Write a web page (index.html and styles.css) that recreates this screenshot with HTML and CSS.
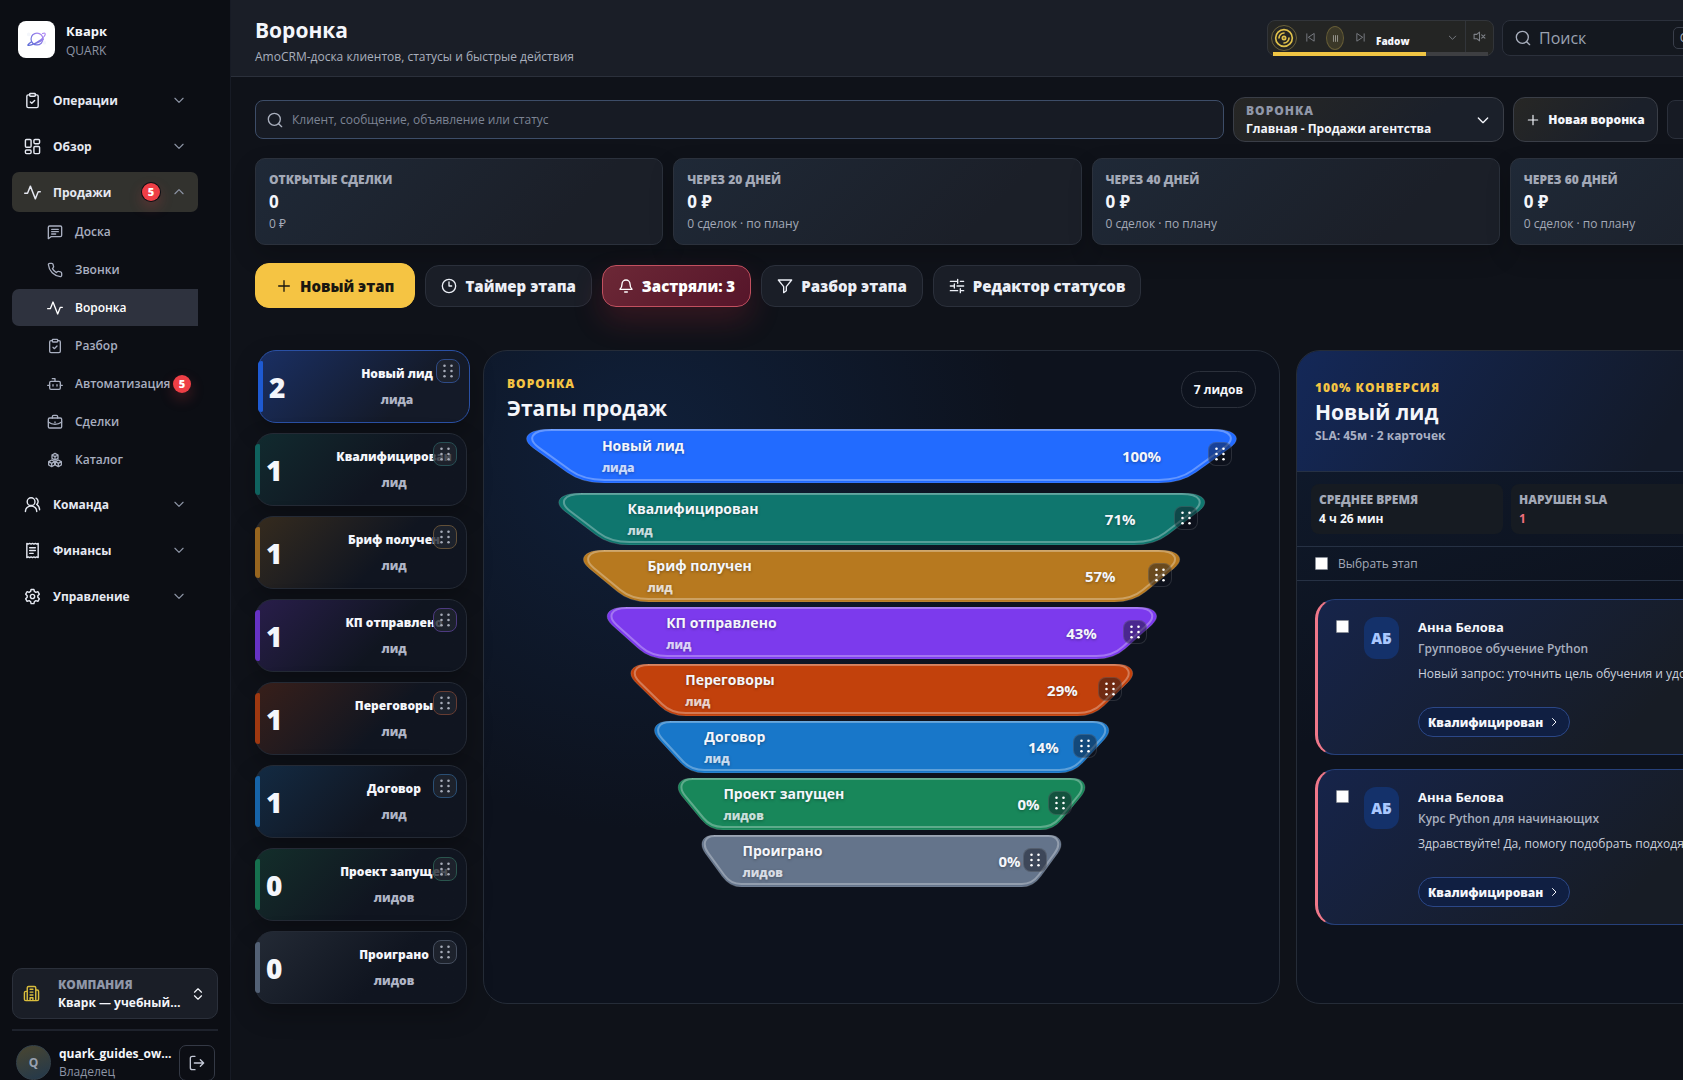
FILE: index.html
```html
<!DOCTYPE html>
<html lang="ru">
<head>
    <meta charset="UTF-8">
    <meta name="viewport" content="width=device-width, initial-scale=1.0">
    <title>Воронка — Кварк</title>
    <link rel="stylesheet" href="styles.css">
</head>
<body>
    <!-- Набор иконок -->
    <svg class="sprite" aria-hidden="true">
        <symbol id="i-clip" viewBox="0 0 24 24"><rect x="8" y="2" width="8" height="4" rx="1"/><path d="M16 4h2a2 2 0 0 1 2 2v14a2 2 0 0 1-2 2H6a2 2 0 0 1-2-2V6a2 2 0 0 1 2-2h2M9 14l2 2 4-4"/></symbol>
        <symbol id="i-grid" viewBox="0 0 24 24"><rect x="2" y="2" width="8" height="11" rx="1.5"/><rect x="14" y="2" width="8" height="6" rx="1.5"/><rect x="14" y="12" width="8" height="10" rx="1.5"/><rect x="2" y="17" width="8" height="5" rx="1.5"/></symbol>
        <symbol id="i-pulse" viewBox="0 0 24 24"><path d="M1 13h4l4-10 7 18 4-10h3"/></symbol>
        <symbol id="i-msg" viewBox="0 0 24 24"><path d="M4 3h16a2 2 0 0 1 2 2v12a2 2 0 0 1-2 2H6l-4 3V5a2 2 0 0 1 2-2zM7 8h10M7 11.500h10M7 15h6"/></symbol>
        <symbol id="i-phone" viewBox="0 0 24 24"><path d="M22 16.900v3a2 2 0 0 1-2.200 2A19.800 19.800 0 0 1 2.100 4.200 2 2 0 0 1 4.100 2h3a2 2 0 0 1 2 1.700c.1 1 .4 1.900.7 2.800a2 2 0 0 1-.5 2.100L8.100 9.900a16 16 0 0 0 6 6l1.300-1.300a2 2 0 0 1 2.100-.4c.9.3 1.800.6 2.800.7a2 2 0 0 1 1.700 2z"/></symbol>
        <symbol id="i-bot" viewBox="0 0 24 24"><path d="M12 8V4H8M1 14h3M20 14h3M9 13v2M15 13v2"/><rect x="4" y="8" width="16" height="12" rx="2"/></symbol>
        <symbol id="i-case" viewBox="0 0 24 24"><rect x="2" y="6" width="20" height="15" rx="2"/><path d="M8 6V4a2 2 0 0 1 2-2h4a2 2 0 0 1 2 2v2M2 12c6 4.500 14 4.500 20 0M12 12v1"/></symbol>
        <symbol id="i-boxes" viewBox="0 0 24 24"><path d="M12 2l4.500 2.500v5L12 12 7.500 9.500v-5zM7 12l4.500 2.500v5L7 22l-4.500-2.500v-5zM17 12l4.500 2.500v5L17 22l-4.500-2.500v-5zM7.500 4.500L12 7l4.500-2.500M12 7v5M2.500 14.500L7 17l4.500-2.500M7 17v5M12.500 14.500L17 17l4.500-2.500M17 17v5"/></symbol>
        <symbol id="i-users" viewBox="0 0 24 24"><circle cx="10" cy="8" r="5.500"/><path d="M2 22a8 8 0 0 1 16 0M17 3a5.500 5.500 0 0 1 1 9c2.500 1.500 4 4 4 7.500"/></symbol>
        <symbol id="i-bill" viewBox="0 0 24 24"><path d="M4 2l2 1 2-1 2 1 2-1 2 1 2-1 2 1 2-1v20l-2-1-2 1-2-1-2 1-2-1-2 1-2-1-2 1zM8 8h8M8 12h8M8 16h5"/></symbol>
        <symbol id="i-gear" viewBox="0 0 24 24"><path d="M10 2h4l.7 2.900 2 1.200 2.900-.9 2 3.500L19.500 10.800v2.400l2.100 2.100-2 3.500-2.900-.9-2 1.200L14 22h-4l-.7-2.900-2-1.200-2.900.9-2-3.500 2.100-2.100v-2.400L2.400 8.700l2-3.500 2.900.9 2-1.200z"/><circle cx="12" cy="12" r="3"/></symbol>
        <symbol id="i-down" viewBox="0 0 24 24"><path d="M5 9l7 7 7-7"/></symbol>
        <symbol id="i-up" viewBox="0 0 24 24"><path d="M5 15l7-7 7 7"/></symbol>
        <symbol id="i-right" viewBox="0 0 24 24"><path d="M9 5l7 7-7 7"/></symbol>
        <symbol id="i-updown" viewBox="0 0 24 24"><path d="M6 9l6-6 6 6M6 15l6 6 6-6"/></symbol>
        <symbol id="i-office" viewBox="0 0 24 24"><path d="M6 22V4a2 2 0 0 1 2-2h8a2 2 0 0 1 2 2v18zM6 9H4a2 2 0 0 0-2 2v9a2 2 0 0 0 2 2h2M18 7h2a2 2 0 0 1 2 2v11a2 2 0 0 1-2 2h-2M10 6h4M10 10h4M10 14h4M10 22v-4h4v4"/></symbol>
        <symbol id="i-exit" viewBox="0 0 24 24"><path d="M9 2H5a3 3 0 0 0-3 3v14a3 3 0 0 0 3 3h4M8 12h14M17 7l5 5-5 5"/></symbol>
        <symbol id="i-find" viewBox="0 0 24 24"><circle cx="11" cy="11" r="9"/><path d="M17.500 17.500L22 22"/></symbol>
        <symbol id="i-plus" viewBox="0 0 24 24"><path d="M12 4v16M4 12h16"/></symbol>
        <symbol id="i-clock" viewBox="0 0 24 24"><circle cx="12" cy="12" r="10"/><path d="M12 6v6h4"/></symbol>
        <symbol id="i-bell" viewBox="0 0 24 24"><path d="M3 17c2-2 3-4 3-8a6 6 0 0 1 12 0c0 4 1 6 3 8zM10 21h4"/></symbol>
        <symbol id="i-filter" viewBox="0 0 24 24"><path d="M2 3h20l-8 10v6l-4 3v-9z"/></symbol>
        <symbol id="i-tune" viewBox="0 0 24 24"><path d="M2 5h11M17 5h5M13 2v6M2 12h6M12 12h10M8 9v6M2 19h11M17 19h5M17 16v6"/></symbol>
        <symbol id="i-prev" viewBox="0 0 24 24"><path d="M20 4v16L8 12zM4 4v16"/></symbol>
        <symbol id="i-next" viewBox="0 0 24 24"><path d="M4 4v16l12-8zM20 4v16"/></symbol>
        <symbol id="i-pause" viewBox="0 0 24 24"><path d="M5 2v20M12 2v20M19 2v20"/></symbol>
        <symbol id="i-mute" viewBox="0 0 24 24"><path d="M12 4v16l-5-4H2V8h5zM16 9l6 6M22 9l-6 6"/></symbol>
        <symbol id="i-disc" viewBox="0 0 24 24"><circle cx="12" cy="12" r="10"/><circle cx="12" cy="12" r="2"/><path d="M6 12a6 6 0 0 1 6-6M18 12a6 6 0 0 1-6 6"/></symbol>
        <symbol id="i-trash" viewBox="0 0 24 24"><path d="M3 6h18M8 6V3h8v3M5 6l1 16h12l1-16"/></symbol>
        <symbol id="i-grip" viewBox="0 0 24 24"><g fill="currentColor" stroke="none"><circle cx="6" cy="3" r="2.200"/><circle cx="18" cy="3" r="2.200"/><circle cx="6" cy="12" r="2.200"/><circle cx="18" cy="12" r="2.200"/><circle cx="6" cy="21" r="2.200"/><circle cx="18" cy="21" r="2.200"/></g></symbol>
        <!-- Форма ступени воронки -->
        <symbol id="i-step" viewBox="0 0 100 52" preserveAspectRatio="none">
            <path class="step-back" d="M6 0H94C97.500 0 98.200 9.500 96.500 18.200L92 41.600Q90 52 87 52H13Q10 52 8 41.600L3.500 18.200C1.800 9.500 2.500 0 6 0Z"/>
            <path class="step-edge" d="M6 1H94C96.900 1 97.300 10 95.700 18.200L91.500 40Q89.800 49 87 49H13Q10.200 49 8.500 40L4.300 18.200C2.700 10 3.100 1 6 1Z"/>
        </symbol>
    </svg>

    <div class="app">
        <aside class="sidebar">
            <div class="brand">
                <span class="brand-logo">
                    <svg viewBox="0 0 24 24"><defs><linearGradient id="lg" x1="0" y1="1" x2="1" y2="0"><stop offset="0" stop-color="#5b6bd6"/><stop offset="1" stop-color="#b58cf5"/></linearGradient></defs><g fill="none" stroke="url(#lg)" stroke-width="1.300"><circle cx="12" cy="12" r="6.500"/><path d="M6 15c-4 3-5 4-3 4 4 0 13-5 17-10 2-3 1-4-2-3M8 17c2 .5 8-2 11-5"/></g><circle cx="3" cy="7" r="1" fill="#8f7be8"/><circle cx="20" cy="16" r="1" fill="#8f7be8"/></svg>
                </span>
                <div>
                    <strong>Кварк</strong>
                    <span>QUARK</span>
                </div>
            </div>

            <nav class="nav">
                <button class="nav-group"><svg><use href="#i-clip"/></svg>Операции<svg class="chev"><use href="#i-down"/></svg></button>
                <button class="nav-group"><svg><use href="#i-grid"/></svg>Обзор<svg class="chev"><use href="#i-down"/></svg></button>
                <button class="nav-group open"><svg><use href="#i-pulse"/></svg>Продажи<span class="badge ring">5</span><svg class="chev"><use href="#i-up"/></svg></button>
                <div class="subnav">
                    <a href="#"><svg><use href="#i-msg"/></svg>Доска</a>
                    <a href="#"><svg><use href="#i-phone"/></svg>Звонки</a>
                    <a href="#" class="active"><svg><use href="#i-pulse"/></svg>Воронка</a>
                    <a href="#"><svg><use href="#i-clip"/></svg>Разбор</a>
                    <a href="#"><svg><use href="#i-bot"/></svg>Автоматизация<span class="badge">5</span></a>
                    <a href="#"><svg><use href="#i-case"/></svg>Сделки</a>
                    <a href="#"><svg><use href="#i-boxes"/></svg>Каталог</a>
                </div>
                <button class="nav-group"><svg><use href="#i-users"/></svg>Команда<svg class="chev"><use href="#i-down"/></svg></button>
                <button class="nav-group"><svg><use href="#i-bill"/></svg>Финансы<svg class="chev"><use href="#i-down"/></svg></button>
                <button class="nav-group"><svg><use href="#i-gear"/></svg>Управление<svg class="chev"><use href="#i-down"/></svg></button>
            </nav>

            <div class="company">
                <svg class="company-icon"><use href="#i-office"/></svg>
                <div class="company-text">
                    <label for="company">Компания</label>
                    <select id="company"><option>Кварк — учебный центр</option></select>
                </div>
                <svg class="company-arrows"><use href="#i-updown"/></svg>
            </div>
            <div class="user">
                <span class="avatar">Q</span>
                <div class="user-text">
                    <strong>quark_guides_owner</strong>
                    <span>Владелец</span>
                </div>
                <button class="exit" aria-label="Выйти"><svg><use href="#i-exit"/></svg></button>
            </div>
        </aside>

        <main class="main">
            <header class="top">
                <div class="top-title">
                    <h1>Воронка</h1>
                    <p>AmoCRM-доска клиентов, статусы и быстрые действия</p>
                </div>
                <div class="top-tools">
                    <div class="player">
                        <button class="disc" aria-label="Плеер"><svg><use href="#i-disc"/></svg></button>
                        <button aria-label="Назад"><svg><use href="#i-prev"/></svg></button>
                        <button class="pause" aria-label="Пауза"><svg><use href="#i-pause"/></svg></button>
                        <button aria-label="Вперёд"><svg><use href="#i-next"/></svg></button>
                        <span class="track">Fadow</span>
                        <button aria-label="Список"><svg><use href="#i-down"/></svg></button>
                        <button class="mute" aria-label="Без звука"><svg><use href="#i-mute"/></svg></button>
                        <span class="progress"><span style="width: 71%"></span></span>
                    </div>
                    <div class="search">
                        <svg><use href="#i-find"/></svg>
                        <input type="text" placeholder="Поиск" aria-label="Поиск">
                        <kbd>Ctrl K</kbd>
                    </div>
                </div>
            </header>

            <div class="content">
                <div class="toolbar">
                    <div class="client-search">
                        <svg><use href="#i-find"/></svg>
                        <input type="text" placeholder="Клиент, сообщение, объявление или статус" aria-label="Поиск клиента">
                    </div>
                    <div class="pipeline">
                        <div>
                            <label for="pipeline">Воронка</label>
                            <select id="pipeline"><option>Главная - Продажи агентства</option></select>
                        </div>
                        <svg><use href="#i-down"/></svg>
                    </div>
                    <button class="new-pipeline"><svg><use href="#i-plus"/></svg>Новая воронка</button>
                    <button class="remove" aria-label="Удалить"><svg><use href="#i-trash"/></svg></button>
                </div>

                <section class="stats">
                    <div class="stat"><h3>Открытые сделки</h3><strong>0</strong><span>0 ₽</span></div>
                    <div class="stat"><h3>Через 20 дней</h3><strong>0 ₽</strong><span>0 сделок · по плану</span></div>
                    <div class="stat"><h3>Через 40 дней</h3><strong>0 ₽</strong><span>0 сделок · по плану</span></div>
                    <div class="stat"><h3>Через 60 дней</h3><strong>0 ₽</strong><span>0 сделок · по плану</span></div>
                </section>

                <div class="actions">
                    <button class="primary"><svg><use href="#i-plus"/></svg>Новый этап</button>
                    <button><svg><use href="#i-clock"/></svg>Таймер этапа</button>
                    <button class="danger"><svg><use href="#i-bell"/></svg>Застряли: 3</button>
                    <button><svg><use href="#i-filter"/></svg>Разбор этапа</button>
                    <button><svg><use href="#i-tune"/></svg>Редактор статусов</button>
                </div>

                <div class="board">
                    <div class="rail">
                        <div class="rail-card c-blue selected"><b>2</b><div><strong>Новый лид</strong><span>лида</span></div><button class="grip" aria-label="Переместить"><svg><use href="#i-grip"/></svg></button></div>
                        <div class="rail-card c-teal"><b>1</b><div><strong>Квалифицирован</strong><span>лид</span></div><button class="grip" aria-label="Переместить"><svg><use href="#i-grip"/></svg></button></div>
                        <div class="rail-card c-amber"><b>1</b><div><strong>Бриф получен</strong><span>лид</span></div><button class="grip" aria-label="Переместить"><svg><use href="#i-grip"/></svg></button></div>
                        <div class="rail-card c-violet"><b>1</b><div><strong>КП отправлено</strong><span>лид</span></div><button class="grip" aria-label="Переместить"><svg><use href="#i-grip"/></svg></button></div>
                        <div class="rail-card c-orange"><b>1</b><div><strong>Переговоры</strong><span>лид</span></div><button class="grip" aria-label="Переместить"><svg><use href="#i-grip"/></svg></button></div>
                        <div class="rail-card c-sky"><b>1</b><div><strong>Договор</strong><span>лид</span></div><button class="grip" aria-label="Переместить"><svg><use href="#i-grip"/></svg></button></div>
                        <div class="rail-card c-green"><b>0</b><div><strong>Проект запущен</strong><span>лидов</span></div><button class="grip" aria-label="Переместить"><svg><use href="#i-grip"/></svg></button></div>
                        <div class="rail-card c-gray"><b>0</b><div><strong>Проиграно</strong><span>лидов</span></div><button class="grip" aria-label="Переместить"><svg><use href="#i-grip"/></svg></button></div>
                    </div>

                    <section class="panel funnel">
                        <div class="funnel-head">
                            <div>
                                <p class="eyebrow">Воронка</p>
                                <h2>Этапы продаж</h2>
                            </div>
                            <span class="pill">7 лидов</span>
                        </div>
                        <div class="steps">
                            <div class="step c-blue first" style="width: 100%"><svg class="shape"><use href="#i-step"/></svg><div class="step-body"><div><strong>Новый лид</strong><span>лида</span></div><b>100%</b></div><button class="grip" aria-label="Переместить"><svg><use href="#i-grip"/></svg></button></div>
                            <div class="step c-teal" style="width: 91%"><svg class="shape"><use href="#i-step"/></svg><div class="step-body"><div><strong>Квалифицирован</strong><span>лид</span></div><b>71%</b></div><button class="grip" aria-label="Переместить"><svg><use href="#i-grip"/></svg></button></div>
                            <div class="step c-amber" style="width: 84%"><svg class="shape"><use href="#i-step"/></svg><div class="step-body"><div><strong>Бриф получен</strong><span>лид</span></div><b>57%</b></div><button class="grip" aria-label="Переместить"><svg><use href="#i-grip"/></svg></button></div>
                            <div class="step c-violet" style="width: 77.400%"><svg class="shape"><use href="#i-step"/></svg><div class="step-body"><div><strong>КП отправлено</strong><span>лид</span></div><b>43%</b></div><button class="grip" aria-label="Переместить"><svg><use href="#i-grip"/></svg></button></div>
                            <div class="step c-orange" style="width: 70.700%"><svg class="shape"><use href="#i-step"/></svg><div class="step-body"><div><strong>Переговоры</strong><span>лид</span></div><b>29%</b></div><button class="grip" aria-label="Переместить"><svg><use href="#i-grip"/></svg></button></div>
                            <div class="step c-sky" style="width: 64%"><svg class="shape"><use href="#i-step"/></svg><div class="step-body"><div><strong>Договор</strong><span>лид</span></div><b>14%</b></div><button class="grip" aria-label="Переместить"><svg><use href="#i-grip"/></svg></button></div>
                            <div class="step c-green" style="width: 57.300%"><svg class="shape"><use href="#i-step"/></svg><div class="step-body"><div><strong>Проект запущен</strong><span>лидов</span></div><b>0%</b></div><button class="grip" aria-label="Переместить"><svg><use href="#i-grip"/></svg></button></div>
                            <div class="step c-gray" style="width: 50.600%"><svg class="shape"><use href="#i-step"/></svg><div class="step-body"><div><strong>Проиграно</strong><span>лидов</span></div><b>0%</b></div><button class="grip" aria-label="Переместить"><svg><use href="#i-grip"/></svg></button></div>
                        </div>
                    </section>

                    <section class="panel stage">
                        <div class="stage-head">
                            <p class="eyebrow">100% конверсия</p>
                            <h2>Новый лид</h2>
                            <span>SLA: 45м · 2 карточек</span>
                        </div>
                        <div class="metrics">
                            <div><h3>Среднее время</h3><strong>4 ч 26 мин</strong></div>
                            <div><h3>Нарушен SLA</h3><strong class="bad">1</strong></div>
                            <div></div>
                        </div>
                        <label class="pick"><input type="checkbox">Выбрать этап</label>
                        <div class="leads">
                            <article class="lead">
                                <input type="checkbox" aria-label="Выбрать Анна Белова">
                                <span class="lead-avatar">АБ</span>
                                <div class="lead-body">
                                    <strong>Анна Белова</strong>
                                    <span class="course">Групповое обучение Python</span>
                                    <p>Новый запрос: уточнить цель обучения и удобное время занятий.</p>
                                    <button>Квалифицирован<svg><use href="#i-right"/></svg></button>
                                </div>
                            </article>
                            <article class="lead">
                                <input type="checkbox" aria-label="Выбрать Анна Белова">
                                <span class="lead-avatar">АБ</span>
                                <div class="lead-body">
                                    <strong>Анна Белова</strong>
                                    <span class="course">Курс Python для начинающих</span>
                                    <p>Здравствуйте! Да, помогу подобрать подходящий курс.</p>
                                    <button>Квалифицирован<svg><use href="#i-right"/></svg></button>
                                </div>
                            </article>
                        </div>
                    </section>
                </div>
            </div>
        </main>
    </div>
</body>
</html>
```
FILE: styles.css
```css
* {
    box-sizing: border-box;
}
body {
    margin: 0;
    background: #0f1219;
    color: #f4f6fb;
    font-family: "Open Sans", "Noto Sans", sans-serif;
    font-size: 12px;
    line-height: 16px;
    overflow: hidden;
}
h1, h2, h3, p {
    margin: 0;
}
button, input, select {
    font-family: inherit;
    color: inherit;
}
button {
    background: none;
    border: 0;
    padding: 0;
    cursor: pointer;
}
select {
    appearance: none;
    background: none;
    border: 0;
    padding: 0;
    outline: 0;
}
svg {
    width: 16px;
    height: 16px;
    flex: none;
    fill: none;
    stroke: currentColor;
    stroke-width: 2;
    stroke-linecap: round;
    stroke-linejoin: round;
}
.sprite {
    display: none;
}

/* цвета этапов */
.c-blue { --c: #226bff; }
.c-teal { --c: #0f766e; }
.c-amber { --c: #b7791f; }
.c-violet { --c: #7c3aed; }
.c-orange { --c: #c2410c; }
.c-sky { --c: #1877c9; }
.c-green { --c: #18875a; }
.c-gray { --c: #64748b; }

.app {
    display: flex;
    height: 100vh;
    overflow: hidden;
}

/* боковое меню */
.sidebar {
    flex: 0 0 231px;
    min-width: 0;
    display: flex;
    flex-direction: column;
    padding: 20px 12px 0;
    background: #0c0e14;
    border-right: 1px solid #171b25;
}
.brand {
    display: flex;
    align-items: center;
    gap: 11px;
    padding: 0 6px;
    height: 38px;
    margin-bottom: 22px;
}
.brand-logo {
    width: 37px;
    height: 37px;
    border-radius: 8px;
    background: #fff;
    display: flex;
    align-items: center;
    justify-content: center;
}
.brand-logo svg {
    width: 22px;
    height: 22px;
}
.brand strong, .brand div span {
    display: block;
    line-height: 20px;
}
.brand div {
    padding-top: 3px;
}
.brand strong {
    font-size: 13px;
}
.brand div span {
    color: #8d94a5;
}
.nav {
    width: 186px;
    display: flex;
    flex-direction: column;
    gap: 6px;
}
.nav-group {
    display: flex;
    align-items: center;
    gap: 12px;
    height: 40px;
    padding: 0 12px;
    border-radius: 7px;
    font-size: 12px;
    font-weight: 700;
    text-align: left;
    color: #e6e9f2;
}
.nav-group svg {
    width: 17px;
    height: 17px;
}
.nav-group .chev {
    width: 14px;
    height: 14px;
    margin-left: auto;
    color: #8d94a5;
}
.nav-group.open {
    background: #32322e;
}
.badge {
    flex: none;
    width: 18px;
    height: 18px;
    border-radius: 50%;
    background: #ee3f46;
    color: #fff;
    font-size: 11px;
    line-height: 18px;
    font-weight: 800;
    text-align: center;
    margin-left: auto;
    box-shadow: 0 6px 14px rgba(238, 63, 70, 0.25);
}
.badge.ring {
    box-shadow: 0 0 0 1px #0c0e14, 0 6px 14px rgba(238, 63, 70, 0.25);
}
.nav-group .badge + .chev {
    margin-left: 0;
}
.subnav {
    display: flex;
    flex-direction: column;
    gap: 1px;
    margin: -5px 0 0;
}
.subnav a {
    display: flex;
    align-items: center;
    gap: 12px;
    height: 37px;
    padding: 0 7px 0 35px;
    color: #a9afc0;
    font-weight: 600;
    text-decoration: none;
    border-radius: 7px 0 0 7px;
}
.subnav a:has(.badge) {
    gap: 0;
}
.subnav a:has(.badge) svg {
    margin-right: 12px;
}
.subnav .active {
    background: #2e323e;
    color: #fff;
}
.company {
    margin-top: auto;
    display: flex;
    align-items: center;
    gap: 8px;
    height: 51px;
    padding: 0 12px 0 10px;
    border: 1px solid #2b303b;
    border-radius: 10px;
    background: #1a1e27;
}
.company-icon {
    width: 17px;
    height: 17px;
    color: #d9bd3c;
}
.company-arrows {
    width: 14px;
    height: 14px;
}
.company-text {
    flex: 1;
    min-width: 0;
    padding-left: 10px;
}
.company label, .pipeline label {
    display: block;
    color: #9097a8;
    font-weight: 800;
    line-height: 18px;
    text-transform: uppercase;
}
.company select, .pipeline select {
    display: block;
    width: 100%;
    font-size: 12px;
    font-weight: 700;
    line-height: 18px;
    text-overflow: ellipsis;
}
.user {
    display: flex;
    align-items: center;
    gap: 8px;
    height: 51px;
    margin-top: 10px;
    padding: 14px 3px 0 4px;
    border-top: 2px solid #1e222c;
}
.avatar {
    flex: none;
    width: 35px;
    height: 35px;
    border-radius: 50%;
    border: 1px solid #34414a;
    background: linear-gradient(160deg, #4a4630, #22384c);
    color: #98a1b0;
    font-weight: 700;
    line-height: 34px;
    text-align: center;
}
.user-text {
    flex: 1;
    min-width: 0;
}
.user-text strong, .user-text span {
    display: block;
    line-height: 18px;
    white-space: nowrap;
    overflow: hidden;
    text-overflow: ellipsis;
}
.user-text strong {
    margin-right: -6px;
}
.user-text span {
    color: #8d94a5;
}
.exit {
    flex: none;
    width: 36px;
    height: 36px;
    display: flex;
    align-items: center;
    justify-content: center;
    border: 1px solid #343945;
    border-radius: 7px;
    color: #c3c8d6;
}

/* рабочая область шире окна, правый край уходит за экран */
.main {
    flex: 1 0 auto;
    min-width: 1711px;
}
.top {
    display: flex;
    justify-content: space-between;
    height: 77px;
    padding: 14px 24px 0;
    background: #1a1e27;
    border-bottom: 1px solid #2b303b;
}
.top h1 {
    font-size: 21px;
    line-height: 32px;
}
.top p {
    line-height: 22px;
    color: #a9afbd;
}
.top-tools {
    flex: 0 0 651px;
    min-width: 0;
    display: flex;
    gap: 8px;
    padding-top: 6px;
}
.player {
    position: relative;
    flex: none;
    display: flex;
    align-items: center;
    gap: 3px;
    width: 227px;
    height: 36px;
    padding: 0 4px 0 3px;
    border: 1px solid #32353a;
    border-radius: 8px;
    background: #242524;
}
.player button {
    width: 20px;
    height: 24px;
    color: #7d8087;
}
.player svg {
    width: 11px;
    height: 11px;
}
.player .disc {
    width: 26px;
    height: 26px;
    border: 1px solid #6b6139;
    border-radius: 50%;
    color: #e0c14b;
}
.player .disc svg {
    display: block;
    width: 20px;
    height: 20px;
    margin: 2px;
}
.player .pause {
    width: 18px;
    margin: 0 3px;
    border: 1px solid #655c36;
    border-radius: 50%;
    background: #3b3828;
    color: #d6d6d6;
}
.player .pause svg {
    width: 7px;
    height: 9px;
}
.track {
    flex: 1;
    padding: 5px 0 0 3px;
    font-size: 10px;
    font-weight: 800;
}
.player .mute {
    width: 24px;
    height: 34px;
    padding-left: 4px;
    border-left: 1px solid #32353a;
}
.player .mute svg {
    width: 13px;
    height: 13px;
}
.progress {
    position: absolute;
    left: 5px;
    right: 5px;
    bottom: -1px;
    height: 4px;
    background: #3e3f42;
}
.progress span {
    display: block;
    height: 100%;
    background: #f0c544;
}
.search {
    flex: 1;
    min-width: 0;
    display: flex;
    align-items: center;
    gap: 8px;
    height: 36px;
    padding: 0 200px 0 12px;
    border: 1px solid #2b303b;
    border-radius: 8px;
    background: #14181f;
    color: #a9afbd;
}
.search input, .client-search input {
    flex: 1;
    min-width: 0;
    border: 0;
    padding: 0;
    background: none;
    outline: 0;
}
.search input {
    font-size: 16px;
}
.search input::placeholder {
    color: #9ba2b1;
}
kbd {
    flex: none;
    padding: 2px 6px;
    border: 1px solid #3a3f4b;
    border-radius: 5px;
    font-family: inherit;
}

.content {
    padding: 20px 24px;
}
.toolbar {
    display: grid;
    grid-template-columns: 1fr 271px 145px 251px;
    align-items: center;
    gap: 9px;
    height: 45px;
}
.client-search {
    display: flex;
    align-items: center;
    gap: 9px;
    height: 39px;
    padding: 0 11px;
    border: 1px solid #3d4d68;
    border-radius: 8px;
    background: #171b24;
    color: #a9afbd;
}
.client-search input {
    font-size: 12px;
}
.client-search input::placeholder {
    color: #7d8494;
}
.pipeline, .new-pipeline {
    display: flex;
    align-items: center;
    height: 45px;
    border: 1px solid #3a3e47;
    border-radius: 12px;
    background: linear-gradient(135deg, #272725, #1b202a 70%);
}
.pipeline {
    padding: 0 12px;
}
.pipeline div {
    flex: 1;
}
.pipeline label {
    letter-spacing: 1px;
}
.new-pipeline {
    justify-content: center;
    gap: 8px;
    font-size: 12px;
    font-weight: 800;
}
.new-pipeline svg {
    width: 14px;
    height: 14px;
}
.remove {
    height: 39px;
    padding-left: 14px;
    border: 1px solid #2b303b;
    border-radius: 8px;
    background: #171b24;
    text-align: left;
}

.stats {
    display: grid;
    grid-template-columns: repeat(4, 1fr);
    gap: 10px;
    margin-top: 16px;
}
.stat {
    height: 87px;
    padding: 11px 13px;
    border: 1px solid #2b313c;
    border-radius: 10px;
    background: linear-gradient(135deg, #1f2937, #1b1f28 75%);
    box-shadow: 0 10px 24px rgba(0, 0, 0, 0.2);
}
.stat h3, .metrics h3 {
    font-size: 12px;
    line-height: 20px;
    font-weight: 800;
    text-transform: uppercase;
    color: #a3a9b7;
}
.stat strong {
    display: block;
    font-size: 17px;
    line-height: 24px;
}
.stat span {
    display: block;
    line-height: 20px;
    color: #a3a9b7;
}

.actions {
    display: flex;
    align-items: center;
    gap: 10px;
    height: 45px;
    margin-top: 18px;
}
.actions button {
    display: flex;
    align-items: center;
    gap: 8px;
    height: 42px;
    padding: 0 15px;
    border: 1px solid #2b303b;
    border-radius: 14px;
    background: #1a1e27;
    font-size: 15px;
    font-weight: 800;
    color: #eceff6;
}
.actions .primary {
    height: 45px;
    padding: 0 20px;
    border-color: #f5c443;
    background: #f5c443;
    color: #191710;
}
.actions .danger {
    border-color: #c2505f;
    background: linear-gradient(135deg, #6c2836, #56152a);
    color: #fff;
    box-shadow: 0 14px 30px rgba(190, 40, 60, 0.22);
}

/* доска */
.board {
    display: grid;
    grid-template-columns: 212px 797fr 622fr;
    gap: 16px;
    margin-top: 42px;
}
.rail {
    display: flex;
    flex-direction: column;
    gap: 10px;
}
.rail-card {
    position: relative;
    display: flex;
    align-items: center;
    height: 73px;
    padding-left: 10px;
    border: 1px solid #242a35;
    border-radius: 18px;
    background: linear-gradient(135deg, color-mix(in srgb, var(--c) 22%, #11151d), #101520 60%);
    box-shadow: 0 10px 24px rgba(0, 0, 0, 0.25);
}
.rail-card::before {
    content: "";
    position: absolute;
    left: -1px;
    top: 10px;
    bottom: 10px;
    width: 5px;
    border-radius: 5px 2px 2px 5px;
    background: color-mix(in srgb, var(--c) 80%, #10141f);
}
.rail-card.selected {
    left: 3px;
    border-color: #2a50a4;
    background: linear-gradient(135deg, #1a2f63, #141a28 70%);
}
.rail-card b {
    width: 56px;
    font-size: 28px;
    line-height: 32px;
    font-weight: 800;
}
.rail-card div {
    flex: 1;
    text-align: center;
}
.rail-card strong, .rail-card span {
    display: block;
    line-height: 26px;
    font-weight: 800;
    white-space: nowrap;
}
.rail-card span {
    color: #b0b5c6;
}
.grip {
    position: absolute;
    display: flex;
    align-items: center;
    justify-content: center;
    width: 24px;
    height: 24px;
    border: 1px solid color-mix(in srgb, var(--c) 35%, #343a46);
    border-radius: 8px;
    background: rgba(32, 37, 48, 0.8);
    color: #a6abb8;
}
.grip svg {
    width: 14px;
    height: 14px;
}
.rail-card .grip {
    right: 9px;
    top: 8px;
}
.panel {
    border: 1px solid #252c38;
    border-radius: 24px;
    overflow: hidden;
}
.eyebrow {
    font-size: 12px;
    line-height: 20px;
    font-weight: 800;
    letter-spacing: 1px;
    text-transform: uppercase;
    color: #f5c443;
}
.panel h2 {
    font-size: 21px;
    line-height: 28px;
}
.funnel {
    padding: 20px 23px;
    background: radial-gradient(circle at 20% 15%, #10203a, #0d121d 45%);
}
.funnel-head {
    display: flex;
    justify-content: space-between;
    height: 58px;
}
.funnel-head > div {
    padding-top: 3px;
}
.pill {
    height: 37px;
    padding: 0 12px;
    border: 1px solid #2b303b;
    border-radius: 19px;
    line-height: 36px;
    font-weight: 700;
}
.steps {
    display: flex;
    flex-direction: column;
    align-items: center;
    gap: 5px;
}
.step {
    position: relative;
    height: 52px;
    text-shadow: 0 1px 3px rgba(0, 0, 0, 0.35);
}
.step.first {
    height: 54px;
    margin-bottom: 5px;
}
.shape {
    position: absolute;
    width: 100%;
    height: 100%;
}
.step-back {
    fill: var(--c);
    stroke: rgba(255, 255, 255, 0.15);
    stroke-width: 1px;
    vector-effect: non-scaling-stroke;
}
.step-edge {
    fill: none;
    stroke: rgba(255, 255, 255, 0.3);
    stroke-width: 2px;
    vector-effect: non-scaling-stroke;
}
.step-body {
    position: relative;
    display: flex;
    justify-content: space-between;
    align-items: center;
    height: 100%;
    padding: 0 calc(12% + 5px);
}
.step-body strong, .step-body span {
    display: block;
}
.step-body strong {
    font-size: 14px;
    line-height: 24px;
}
.step-body span {
    line-height: 20px;
    font-weight: 800;
    opacity: 0.8;
}
.step-body b {
    font-size: 15px;
}
.step .grip {
    right: 24px;
    top: 13px;
    border-color: rgba(255, 255, 255, 0.12);
    background: rgba(13, 18, 29, 0.45);
    color: #fff;
}

.stage {
    background: linear-gradient(160deg, #101c30, #0d121d 45%);
}
.stage-head {
    height: 121px;
    padding: 27px 18px 0;
    background: linear-gradient(120deg, #142858, #131a29 60%);
    border-bottom: 1px solid #263144;
}
.stage-head span {
    display: block;
    line-height: 20px;
    font-weight: 700;
    color: #a9b0c4;
}
.metrics {
    display: grid;
    grid-template-columns: repeat(3, 1fr);
    gap: 8px;
    padding: 12px 14px;
    border-bottom: 1px solid #263144;
}
.metrics div {
    height: 50px;
    padding: 6px 8px;
    border-radius: 8px;
    background: #161b22;
}
.metrics strong {
    display: block;
    font-size: 12px;
    line-height: 18px;
}
.metrics .bad {
    color: #f2707d;
}
.pick {
    display: flex;
    align-items: center;
    gap: 10px;
    height: 34px;
    padding: 0 18px;
    border-bottom: 1px solid #263144;
    color: #a3a9b7;
}
input[type="checkbox"] {
    appearance: none;
    flex: none;
    width: 13px;
    height: 13px;
    margin: 0;
    border: 1px solid #8a8f99;
    border-radius: 1px;
    background: #fff;
}
input[type="checkbox"]:checked {
    background: #226bff;
}
.leads {
    display: flex;
    flex-direction: column;
    gap: 14px;
    padding: 18px;
}
.lead {
    display: flex;
    height: 156px;
    padding: 17px;
    border: 1px solid #26407a;
    border-left: 3px solid #f0788a;
    border-radius: 20px;
    background: linear-gradient(135deg, #16244a, #171c25 60%);
}
.lead input {
    margin: 3px 15px 0 1px;
}
.lead-avatar {
    flex: none;
    width: 35px;
    height: 42px;
    margin-right: 19px;
    border-radius: 12px;
    background: #14316a;
    color: #a9c8ff;
    font-size: 15px;
    font-weight: 800;
    line-height: 42px;
    text-align: center;
}
.lead-body strong {
    display: block;
    font-size: 13px;
    line-height: 20px;
}
.course {
    display: block;
    line-height: 24px;
    font-weight: 600;
    color: #a8afbf;
}
.lead-body p {
    line-height: 26px;
    white-space: nowrap;
    color: #cbd0dc;
}
.lead-body button {
    display: flex;
    align-items: center;
    gap: 5px;
    height: 30px;
    margin-top: 20px;
    padding: 0 9px;
    border: 1px solid #2b4787;
    border-radius: 15px;
    background: #101f42;
    font-size: 12px;
    font-weight: 800;
}
.lead-body svg {
    width: 12px;
    height: 12px;
}
```
